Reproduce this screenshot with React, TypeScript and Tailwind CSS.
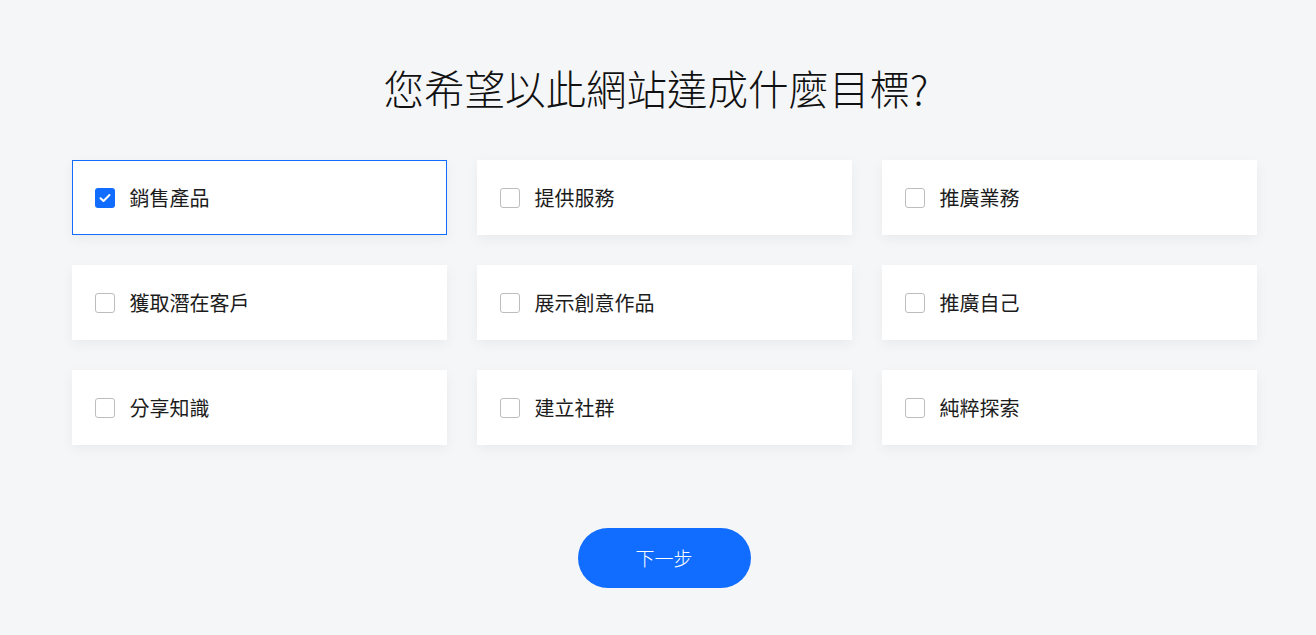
import { useState } from 'react';

const goals = [
  '銷售產品',
  '提供服務',
  '推廣業務',
  '獲取潛在客戶',
  '展示創意作品',
  '推廣自己',
  '分享知識',
  '建立社群',
  '純粹探索',
];

export default function App() {
  const [selected, setSelected] = useState<string[]>(['銷售產品']);

  const toggle = (goal: string) => {
    setSelected((prev) => (prev.includes(goal) ? prev.filter((g) => g !== goal) : [...prev, goal]));
  };

  return (
    <div
      className="min-h-[635px] w-full bg-[#f5f6f8] flex flex-col items-center"
      style={{ fontFamily: '"Noto Sans CJK TC", "Noto Sans", sans-serif' }}
    >
      <h1 className="mt-[62px] mr-[4px] text-[40.5px] leading-[52px] text-[#111] font-light">您希望以此網站達成什麼目標?</h1>
      <div className="mt-[46px] ml-[12px] grid grid-cols-3 gap-[30px] w-[1185px]">
        {goals.map((goal) => {
          const isChecked = selected.includes(goal);
          return (
            <button
              key={goal}
              onClick={() => toggle(goal)}
              className={`h-[75px] bg-white flex items-center pl-[22px] text-left shadow-[0_4px_12px_rgba(0,0,0,0.05)] border ${
                isChecked ? 'border-[#116dff]' : 'border-white'
              }`}
            >
              <span
                className={`w-5 h-5 rounded-[3px] flex items-center justify-center ${
                  isChecked ? 'bg-[#116dff]' : 'border border-[#bdbdbd] bg-white'
                }`}
              >
                {isChecked && (
                  <svg width="12" height="10" viewBox="0 0 12 10" fill="none">
                    <path d="M1.5 5.2 4.5 8 10.5 2" stroke="white" strokeWidth="2" strokeLinecap="round" strokeLinejoin="round" />
                  </svg>
                )}
              </span>
              <span className="ml-[15px] text-[20px] text-[#1c1c1c]">{goal}</span>
            </button>
          );
        })}
      </div>
      <button className="mt-[83px] ml-[12px] w-[173px] h-[60px] rounded-full bg-[#116dff] text-white text-[19px] font-light">
        下一步
      </button>
    </div>
  );
}
